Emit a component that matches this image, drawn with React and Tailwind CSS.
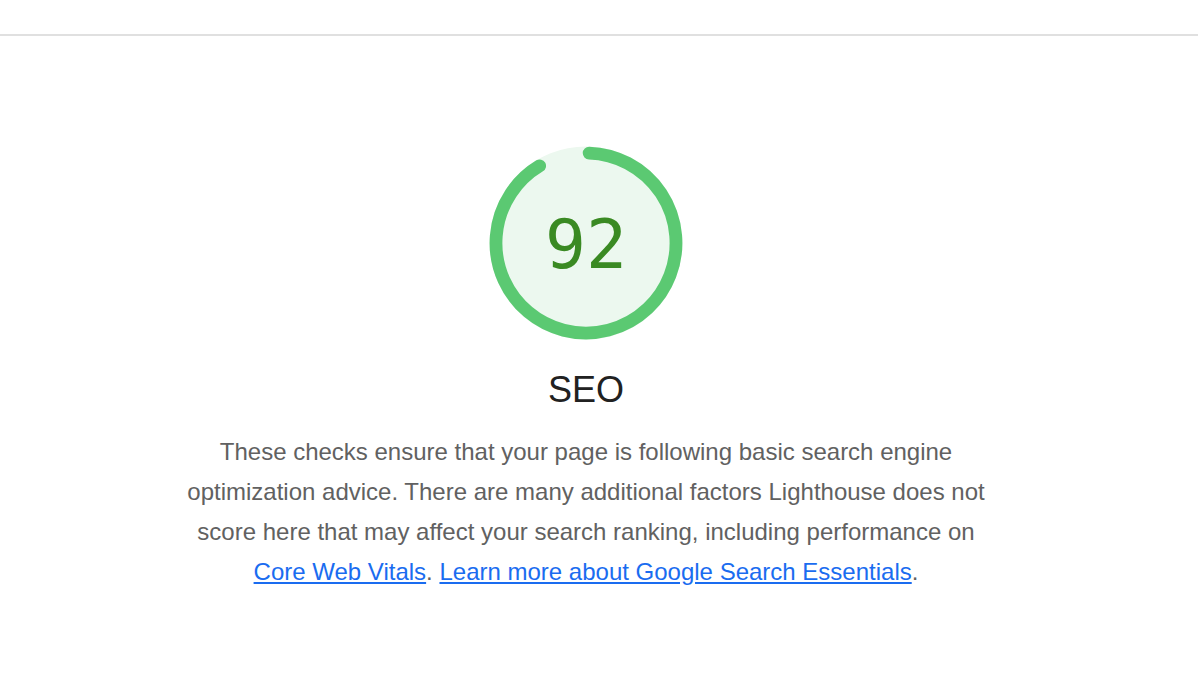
export default function App() {
  return (
    <div className="w-full h-[690px] bg-white overflow-hidden" style={{ fontFamily: '"Liberation Sans", Arial, sans-serif' }}>
      <div className="h-[36px] border-b-2 border-[#e0e0e0]" />
      <div className="flex flex-col items-center pr-[26px]">
        <div className="relative mt-[110px] w-[194px] h-[194px]">
          <svg width="194" height="194" viewBox="0 0 194 194" className="absolute inset-0">
            <circle cx="97" cy="97" r="90" fill="#ecf8ef" stroke="#ecf8ef" strokeWidth="12.8" />
            <path d="M100.14 7.06 A90 90 0 1 1 50.65 19.85" fill="none" stroke="#5bc972" strokeWidth="12.8" strokeLinecap="round" />
          </svg>
          <div className="absolute inset-0 flex items-center justify-center pt-[3px]">
            <span className="text-[68px] leading-[68px] text-[#3a8a23]" style={{ fontFamily: '"DejaVu Sans Mono", monospace' }}>92</span>
          </div>
        </div>
        <div className="mt-[32px] text-[36px] leading-[36px] text-[#212121]">SEO</div>
        <p className="mt-[24px] w-[816px] text-center text-[24px] leading-[40px] text-[#616161]">
          These checks ensure that your page is following basic search engine optimization advice. There are many additional factors Lighthouse does not score here that may affect your search ranking, including performance on{' '}
          <a href="#" className="text-[#1a6cf0] underline">Core Web Vitals</a>.{' '}
          <a href="#" className="text-[#1a6cf0] underline">Learn more about Google Search Essentials</a>.
        </p>
      </div>
    </div>
  );
}
